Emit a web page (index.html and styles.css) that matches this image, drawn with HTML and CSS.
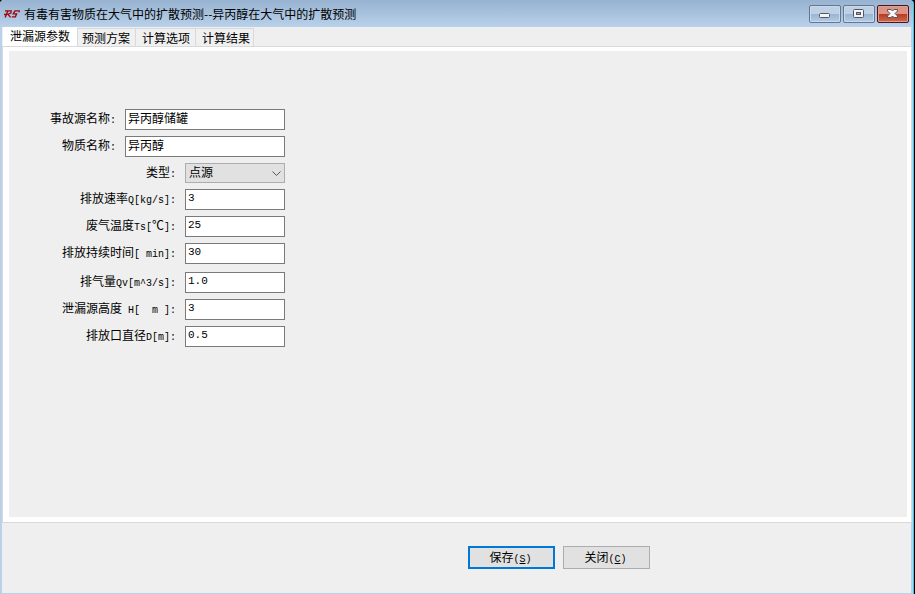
FILE: index.html
```
<!DOCTYPE html>
<html lang="zh-CN">

<head>
    <meta charset="UTF-8">
    <meta name="viewport" content="width=device-width, initial-scale=1.0">
    <title>有毒有害物质在大气中的扩散预测</title>
    <link rel="stylesheet" href="styles.css">
</head>

<body>
    <div class="window">
        <div class="title-bar">
            <svg class="logo" width="16" height="12" viewBox="0 0 16 12" fill="none" stroke="#a3000c" stroke-width="1.3">
                <path d="M1 2.8H7.2L6.8 5L4 6.2L6.5 9.4M3.8 3L1.2 9.5M0 6.5H3" />
                <path d="M15.2 4.2V2.8H11L9.2 5.8H12.6L11.4 8.8H7.8" />
            </svg>
            <div class="title">有毒有害物质在大气中的扩散预测--异丙醇在大气中的扩散预测</div>
            <div class="title-btns">
                <button type="button" class="win-btn" aria-label="最小化">
                    <svg width="12" height="12" viewBox="0 0 12 12">
                        <rect x="0.5" y="5.5" width="10" height="4" rx="1" fill="#f4f4f4" stroke="#535666" />
                    </svg>
                </button>
                <button type="button" class="win-btn" aria-label="最大化">
                    <svg width="12" height="12" viewBox="0 0 12 12">
                        <rect x="0.5" y="1.5" width="10" height="8" rx="1" fill="#f4f4f4" stroke="#535666" />
                        <rect x="3.5" y="4.5" width="4" height="2" fill="#8fadcd" stroke="#535666" />
                    </svg>
                </button>
                <button type="button" class="win-btn win-close" aria-label="关闭窗口">
                    <svg width="12" height="12" viewBox="0 0 12 12">
                        <path d="M0.5 1.5H4L5.5 3L7 1.5H10.5V3L8 5.5L10.5 8V9.5H7L5.5 8L4 9.5H0.5V8L3 5.5L0.5 3Z"
                            fill="#f8f8f8" stroke="#5b5060" />
                    </svg>
                </button>
            </div>
        </div>

        <div class="tabs" role="tablist">
            <button type="button" class="tab active" role="tab" aria-selected="true">泄漏源参数</button>
            <button type="button" class="tab" role="tab" aria-selected="false">预测方案</button>
            <button type="button" class="tab" role="tab" aria-selected="false">计算选项</button>
            <button type="button" class="tab" role="tab" aria-selected="false">计算结果</button>
        </div>

        <div class="panel">
            <form class="form" id="sourceForm">
                <div class="group">
                    <div class="row">
                        <label for="sourceName">事故源名称<span class="en">:</span></label>
                        <input type="text" class="wide" id="sourceName" value="异丙醇储罐">
                    </div>
                    <div class="row">
                        <label for="matterName">物质名称<span class="en">:</span></label>
                        <input type="text" class="wide" id="matterName" value="异丙醇">
                    </div>
                    <div class="row">
                        <label for="sourceType">类型<span class="en">:</span></label>
                        <div class="select">
                            <select id="sourceType">
                                <option>点源</option>
                            </select>
                            <svg class="arrow" width="9" height="6" viewBox="0 0 9 6" fill="none" stroke="#555">
                                <path d="M0.5 0.5L4.5 4.5L8.5 0.5" />
                            </svg>
                        </div>
                    </div>
                    <div class="row">
                        <label for="rate">排放速率<span class="en">Q[kg/s]:</span></label>
                        <input type="text" class="num" id="rate" value="3">
                    </div>
                    <div class="row">
                        <label for="temp">废气温度<span class="en">Ts[</span>℃<span class="en">]:</span></label>
                        <input type="text" class="num" id="temp" value="25">
                    </div>
                    <div class="row">
                        <label for="duration">排放持续时间<span class="en">[ min]:</span></label>
                        <input type="text" class="num" id="duration" value="30">
                    </div>
                </div>
                <div class="group">
                    <div class="row">
                        <label for="volume">排气量<span class="en">Qv[m^3/s]:</span></label>
                        <input type="text" class="num" id="volume" value="1.0">
                    </div>
                    <div class="row">
                        <label for="height">泄漏源高度<span class="en"> H[  m ]:</span></label>
                        <input type="text" class="num" id="height" value="3">
                    </div>
                    <div class="row">
                        <label for="diameter">排放口直径<span class="en">D[m]:</span></label>
                        <input type="text" class="num" id="diameter" value="0.5">
                    </div>
                </div>
            </form>
        </div>

        <div class="footer">
            <button type="submit" form="sourceForm" class="btn btn-default" accesskey="s">保存<span class="en">(<u>S</u>)</span></button>
            <button type="button" class="btn" accesskey="c">关闭<span class="en">(<u>C</u>)</span></button>
        </div>
    </div>
</body>

</html>
```
FILE: styles.css
```
* {
    box-sizing: border-box;
}

body {
    margin: 0;
    background: #000;
    padding-right: 1px;
}

body,
button,
input,
select {
    font-family: "Noto Sans CJK SC", sans-serif;
    font-size: 12px;
    line-height: 16px;
    color: #000;
}

.window {
    min-height: 100vh;
    display: flex;
    flex-direction: column;
    background: #efefef;
    border: solid #b9d1ea;
    border-width: 0 2px 1px 2px;
    border-radius: 4px 4px 0 0;
    box-shadow: 1px 0 0 #3fc4dc;
    margin-right: 1px;
}

/* 标题栏 */
.title-bar {
    height: 27px;
    display: flex;
    align-items: center;
    gap: 4px;
    margin: 0 -2px;
    padding: 1px 4px 0 4px;
    border-radius: 4px 4px 0 0;
    background: linear-gradient(#97b3d1, #b9d1ea);
}

.logo {
    flex: none;
}

.title {
    flex: 1;
    white-space: nowrap;
    overflow: hidden;
}

.title-btns {
    display: flex;
    gap: 2px;
}

.win-btn {
    width: 32px;
    height: 18px;
    padding: 0;
    display: flex;
    align-items: center;
    justify-content: center;
    border: 1px solid #66768f;
    border-radius: 2px;
    box-shadow: inset 0 0 0 1px #c8daec;
    background: linear-gradient(#bed0e4 50%, #98b4d2 50%, #b4cce6);
}

.win-close {
    border-color: #4a1420;
    box-shadow: inset 0 0 0 1px #e0a090;
    background: linear-gradient(#dc9384 50%, #b83a22 50%, #cc6a4c);
}

/* 选项卡 */
.tabs {
    display: flex;
    align-items: flex-end;
    height: 20px;
    padding-left: 1px;
    border-bottom: 1px solid #d9d9d9;
}

.tab {
    height: 18px;
    padding: 0 5px 0 6px;
    border: 1px solid #d9d9d9;
    border-width: 1px 1px 0 0;
    background: #f0f0f0;
    white-space: nowrap;
}

.tab.active {
    height: 20px;
    padding: 0 7px 4px 7px;
    margin-bottom: -1px;
    border-top-color: #fff;
    background: #fff;
}

.tab:nth-child(2) {
    padding: 0 5px 0 4px;
}

.tab:last-child {
    padding-right: 3px;
}

.panel {
    flex: 1;
    border: solid #fff;
    border-width: 4px 4px 5px 6px;
    outline: 1px solid #d9d9d9;
    margin: 0 0 1px 1px;
    padding: 58px 20px 20px 20px;
}

/* 参数表单 */
.form {
    width: 256px;
    display: flex;
    flex-direction: column;
    gap: 8px;
}

.group {
    display: flex;
    flex-direction: column;
    gap: 6px;
}

.row {
    display: flex;
    justify-content: flex-end;
    align-items: center;
    gap: 9px;
}

.row label {
    padding-bottom: 2px;
    line-height: 14px;
    white-space: pre;
}

.en {
    font-family: "Liberation Mono", monospace;
    font-size: 10px;
    line-height: 1;
}

.row input {
    width: 100px;
    height: 21px;
    padding: 0 2px 3px 2px;
    border: 1px solid #7a7a7a;
    background: #fff;
}

.row .wide {
    width: 160px;
    padding-bottom: 4px;
}

.row .num {
    font-family: "Liberation Mono", monospace;
    font-size: 11px;
}

.select {
    position: relative;
    width: 100px;
    height: 20px;
}

.select select {
    width: 100%;
    height: 100%;
    padding: 0 16px 2px 3px;
    border: 1px solid #adadad;
    border-radius: 0;
    background: #e1e1e1;
    appearance: none;
}

.select .arrow {
    position: absolute;
    right: 4px;
    top: 8px;
    pointer-events: none;
}

/* 底部按钮 */
.footer {
    height: 70px;
    display: flex;
    justify-content: flex-end;
    gap: 8px;
    padding: 23px 261px 0 0;
}

.btn {
    width: 87px;
    height: 23px;
    padding: 0 2px 2px 0;
    border: 1px solid #adadad;
    background: #e1e1e1;
}

.btn-default {
    border: 2px solid #0078d7;
}
```
